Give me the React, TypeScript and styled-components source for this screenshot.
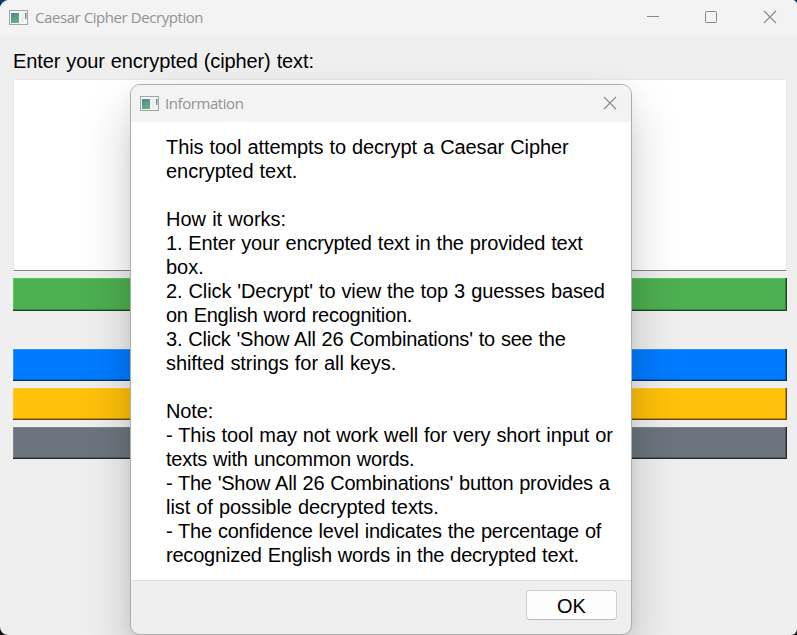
import React from "react";
import styled, { createGlobalStyle } from "styled-components";

const GlobalStyle = createGlobalStyle`
  * { box-sizing: border-box; }
  body { margin: 0; overflow: hidden; background: linear-gradient(#0c3c6c 0, #123a5c 50%, #161214 80%); }
`;

const Window = styled.div`
  position: relative;
  width: 797px;
  height: 635px;
  display: flex;
  flex-direction: column;
  background: #efefef;
  border-radius: 9px 5px 6px 8px;
  overflow: hidden;
  font-family: "Liberation Sans", Arial, sans-serif;
  color: #000;
`;

const TitleBar = styled.header<{ $dialog?: boolean }>`
  display: flex;
  align-items: center;
  flex: none;
  height: ${(p) => (p.$dialog ? 37 : 36)}px;
  padding: ${(p) => (p.$dialog ? "0 14px 1px 9px" : "0 20px 2px 9px")};
  background: #f3f3f3;
`;

const Title = styled.span<{ $dialog?: boolean }>`
  flex: 1;
  margin-left: ${(p) => (p.$dialog ? 6 : 7)}px;
  font: 15px/20px "Open Sans", "Noto Sans", sans-serif;
  letter-spacing: -0.43px;
  white-space: nowrap;
  color: #929292;
`;

const Controls = styled.div`
  display: flex;
  gap: 45px;
`;

const Content = styled.main`
  display: flex;
  flex-direction: column;
  padding: 13px 10px 0 13px;
`;

const Label = styled.label`
  height: 30px;
  font-size: 20px;
  line-height: 24px;
  letter-spacing: -0.11px;
  word-spacing: 0.6px;
`;

const CipherInput = styled.div`
  height: 192px;
  background: #fff;
  border: 1px solid #e8e8e8;
  border-bottom-color: #858585;
`;

type Tone = "green" | "blue" | "amber" | "gray";
const tones: Record<Tone, string[]> = {
  green: ["#4caf50", "#52cb58", "#3a863d", "#1d431f"],
  blue: ["#007bff", "#2f92ff", "#005fc4", "#003064"],
  amber: ["#ffc10a", "#ffcb24", "#c08b10", "#604812"],
  gray: ["#6c757d", "#7c8790", "#52595f", "#24292d"],
};

const ActionButton = styled.button<{ $tone: Tone; $height?: number; $top?: number }>`
  flex: none;
  height: ${(p) => p.$height ?? 32}px;
  margin: ${(p) => p.$top ?? 7}px 0 0;
  padding: 0;
  border: 0;
  background: ${(p) => tones[p.$tone][0]};
  box-shadow:
    inset 0 -1px ${(p) => tones[p.$tone][3]},
    inset -1px 0 ${(p) => tones[p.$tone][3]},
    inset 0 -2px ${(p) => tones[p.$tone][2]},
    inset -2px 0 ${(p) => tones[p.$tone][2]},
    inset 1px 1px ${(p) => tones[p.$tone][1]};
`;

const Dialog = styled.section`
  position: absolute;
  left: 130px;
  top: 84px;
  width: 502px;
  height: 551px;
  display: flex;
  flex-direction: column;
  border: 1px solid #adadad;
  border-radius: 10px;
  background: #efefef;
  overflow: hidden;
  box-shadow: 0 26px 50px rgba(0, 0, 0, 0.2), 0 2px 16px rgba(0, 0, 0, 0.05);
`;

const Message = styled.div`
  flex: none;
  height: 459px;
  padding: 13px 0 0 35px;
  background: #fff;
  border-bottom: 1px solid #dfdfdf;
`;

const Line = styled.div<{ $spacing: number }>`
  height: 24px;
  font-size: 20px;
  line-height: 24px;
  letter-spacing: ${(p) => p.$spacing}px;
  word-spacing: 0.6px;
  white-space: pre;
`;

const Footer = styled.footer`
  display: flex;
  justify-content: flex-end;
  padding: 9px 14px 0 0;
`;

const OkButton = styled.button`
  width: 91px;
  height: 30px;
  padding: 1px 0 0;
  border: 1px solid #d0d0d0;
  border-bottom-color: #bcbcbc;
  border-radius: 4px;
  background: #fdfdfd;
  color: #000;
  font: 20px/26px "Liberation Sans", Arial, sans-serif;
`;

const AppIcon = () => (
  <svg width="19" height="15" viewBox="0 0 19 15">
    <defs>
      <linearGradient id="pane" x1="0" y1="0" x2="0.5" y2="1">
        <stop offset="0" stopColor="#4f7fa6" />
        <stop offset="1" stopColor="#60b578" />
      </linearGradient>
    </defs>
    <rect x="0.5" y="0.5" width="18" height="14" fill="#f5f5f5" stroke="#a2a5a9" />
    <rect x="2" y="3" width="8" height="10" fill="url(#pane)" />
    <rect x="12" y="3" width="3" height="9" fill="#eceef0" />
    <rect x="16" y="3" width="1.5" height="6" fill="url(#pane)" />
  </svg>
);

const CloseIcon = () => (
  <svg width="14" height="14" viewBox="0 0 14 14" fill="none" stroke="#888" strokeWidth="1.1">
    <path d="M1 1 13 13M13 1 1 13" />
  </svg>
);

const lines: [string, number][] = [
  ["This tool attempts to decrypt a Caesar Cipher", -0.09],
  ["encrypted text.", -0.04],
  ["", 0],
  ["How it works:", 0],
  ["1. Enter your encrypted text in the provided text", -0.17],
  ["box.", 0],
  ["2. Click 'Decrypt' to view the top 3 guesses based", -0.11],
  ["on English word recognition.", -0.25],
  ["3. Click 'Show All 26 Combinations' to see the", -0.21],
  ["shifted strings for all keys.", -0.08],
  ["", 0],
  ["Note:", -0.1],
  ["- This tool may not work well for very short input or", -0.12],
  ["texts with uncommon words.", -0.22],
  ["- The 'Show All 26 Combinations' button provides a", -0.24],
  ["list of possible decrypted texts.", -0.06],
  ["- The confidence level indicates the percentage of", -0.2],
  ["recognized English words in the decrypted text.", -0.21],
];

export default function App() {
  return (
    <>
      <GlobalStyle />
      <Window>
        <TitleBar>
          <AppIcon />
          <Title>Caesar Cipher Decryption</Title>
          <Controls>
            <svg width="14" height="14" viewBox="0 0 14 14" fill="none" stroke="#888">
              <path d="M2 6.5H14" />
            </svg>
            <svg width="14" height="14" viewBox="0 0 14 14" fill="none" stroke="#888">
              <rect x="1.5" y="1.5" width="11" height="11" rx="1" />
            </svg>
            <CloseIcon />
          </Controls>
        </TitleBar>
        <Content>
          <Label>Enter your encrypted (cipher) text:</Label>
          <CipherInput />
          <ActionButton $tone="green" $height={33} aria-label="Decrypt" />
          <ActionButton $tone="blue" $top={38} aria-label="Show All 26 Combinations" />
          <ActionButton $tone="amber" aria-label="Information" />
          <ActionButton $tone="gray" aria-label="Clear" />
        </Content>
        <Dialog role="dialog">
          <TitleBar $dialog>
            <AppIcon />
            <Title $dialog>Information</Title>
            <CloseIcon />
          </TitleBar>
          <Message>
            {lines.map(([text, spacing], i) => (
              <Line key={i} $spacing={spacing}>{text}</Line>
            ))}
          </Message>
          <Footer>
            <OkButton>OK</OkButton>
          </Footer>
        </Dialog>
      </Window>
    </>
  );
}
